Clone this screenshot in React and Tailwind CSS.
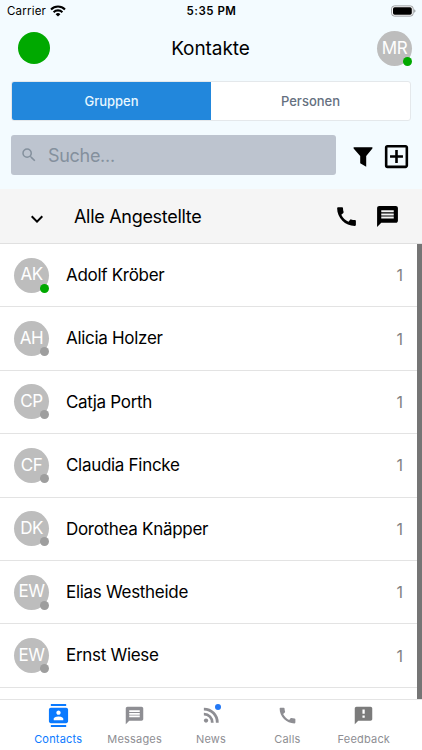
import React, { useState } from 'react'
import {
  MdCall,
  MdContacts,
  MdExpandMore,
  MdMessage,
  MdOutlineAddBox,
  MdSearch,
} from 'react-icons/md'

const WifiIcon = () => (
  <svg width="16" height="12" viewBox="0 0 16 12" fill="none" stroke="black" strokeWidth="2.1">
    <path d="M1 4.4a10 10 0 0 1 14 0" />
    <path d="M3.6 7.2a6.3 6.3 0 0 1 8.8 0" />
    <path d="M8 11.6L5.6 9.2a3.4 3.4 0 0 1 4.8 0z" fill="black" stroke="none" />
  </svg>
)

const BatteryIcon = () => (
  <svg width="25" height="12" viewBox="0 0 25 12">
    <rect x="0.6" y="0.9" width="21.6" height="10.2" rx="2.8" fill="white" stroke="#9a9da0" />
    <rect x="2" y="2.3" width="18.8" height="7.4" rx="1.6" fill="black" />
    <path d="M23.3 4.2a2 2 0 0 1 0 3.6z" fill="#85888a" />
  </svg>
)

const FunnelIcon = () => (
  <svg width="20" height="20" viewBox="0 0 20 20" fill="black">
    <path d="M.6.3h18.8v1.2L13.2 8.9v10.9L7.2 16.2V8.9L.6 1.5z" />
  </svg>
)

const RssIcon = ({ size }) => (
  <svg width={size} height={size} viewBox="0 0 20 20" fill="none" stroke="currentColor" strokeWidth="2.7">
    <circle cx="4.9" cy="15.2" r="2.1" fill="currentColor" stroke="none" />
    <path d="M2.8 8.9a8 8 0 0 1 8.2 8.4" />
    <path d="M2.8 4a13 13 0 0 1 13.1 13.3" />
  </svg>
)

const FeedbackIcon = ({ size }) => (
  <svg width={size} height={size} viewBox="0 0 24 24">
    <path d="M20 2H4c-1.1 0-2 .9-2 2v18l4-4h14c1.1 0 2-.9 2-2V4c0-1.1-.9-2-2-2z" fill="#7b7b7b" />
    <path d="M10.8 5h2.6v5h-2.6zM10.8 12h2.6v2.6h-2.6z" fill="white" />
  </svg>
)

const contacts = [
  { initials: 'AK', name: 'Adolf Kröber', count: 1, online: true },
  { initials: 'AH', name: 'Alicia Holzer', count: 1 },
  { initials: 'CP', name: 'Catja Porth', count: 1 },
  { initials: 'CF', name: 'Claudia Fincke', count: 1 },
  { initials: 'DK', name: 'Dorothea Knäpper', count: 1 },
  { initials: 'EW', name: 'Elias Westheide', count: 1 },
  { initials: 'EW', name: 'Ernst Wiese', count: 1 },
]

const tabs = [
  { label: 'Contacts', icon: MdContacts, size: 23 },
  { label: 'Messages', icon: MdMessage, size: 21 },
  { label: 'News', icon: RssIcon, size: 20.5, unread: true },
  { label: 'Calls', icon: MdCall, size: 21 },
  { label: 'Feedback', icon: FeedbackIcon, size: 21 },
]

const Avatar = ({ initials, online = false }) => (
  <div className="relative flex h-[35px] w-[35px] shrink-0 items-center justify-center rounded-full bg-[#bdbdbd] text-[17px] tracking-[-0.5px] text-white">
    {initials}
    <span
      className={`absolute right-0 bottom-0 h-[9px] w-[9px] rounded-full ${online ? 'bg-[#00a900]' : 'bg-[#9e9e9e]'}`}
    />
  </div>
)

const StatusBar = () => (
  <div className="grid h-[22px] grid-cols-3 items-center pl-[7px] pr-[6px] text-[11.5px]">
    <div className="flex items-center gap-1">
      <span className="pt-0.5 tracking-[0.2px]">Carrier</span>
      <WifiIcon />
    </div>
    <span className="pt-0.5 text-center font-semibold tracking-[0.5px]">5:35 PM</span>
    <div className="flex justify-end">
      <BatteryIcon />
    </div>
  </div>
)

const SegmentedControl = ({ value, onChange }) => (
  <div className="mx-[11px] mt-[6px] flex h-10 overflow-hidden rounded-[3px] border border-[#e4e8eb] bg-white text-[13px] font-medium">
    {['Gruppen', 'Personen'].map((item) => (
      <button
        key={item}
        onClick={() => onChange(item)}
        className={`flex-1 pt-0.5 ${value === item ? 'bg-[#2287dc] text-[#e8f7ff]' : 'text-[#657080]'}`}
      >
        {item}
      </button>
    ))}
  </div>
)

const ContactRow = ({ contact }) => (
  <li className="flex h-[63.4px] shrink-0 items-center border-b border-[#e3e3e3] pl-[14px] pr-[14px]">
    <Avatar initials={contact.initials} online={contact.online} />
    <span className="ml-[17px] flex-1 pt-px text-[17px] tracking-[-0.3px]">{contact.name}</span>
    <span className="text-base text-[#828282]">{contact.count}</span>
  </li>
)

const TabBar = ({ active, onChange }) => (
  <nav className="flex h-[51px] shrink-0 border-t border-[#e4e4e4] bg-white px-5">
    {tabs.map(({ label, icon: Icon, size, unread }) => (
      <button
        key={label}
        onClick={() => onChange(label)}
        className={`flex flex-1 flex-col items-center ${active === label ? 'text-[#0a7aff]' : 'text-[#8e8e93]'}`}
      >
        <span className="relative mt-1 flex h-[23px] items-center">
          <Icon size={size} />
          {unread && <span className="absolute right-0 top-0 h-1.5 w-1.5 rounded-full bg-[#2378f5]" />}
        </span>
        <span className="mt-1 text-[11px] leading-4 tracking-[0.2px]">{label}</span>
      </button>
    ))}
  </nav>
)

export default function App() {
  const [segment, setSegment] = useState('Gruppen')
  const [activeTab, setActiveTab] = useState('Contacts')
  const [query, setQuery] = useState('')

  return (
    <div className="flex h-[750px] w-[422px] flex-col overflow-hidden bg-white font-['Inter',sans-serif] text-black">
      <header className="h-[189px] shrink-0 bg-[#f3fbff]">
        <StatusBar />

        {/* Title row */}
        <div className="grid h-[53px] grid-cols-[1fr_auto_1fr] items-center pl-[18px] pr-[10px]">
          <div className="-mt-0.5 h-8 w-8 rounded-full bg-[#00a900]" />
          <h1 className="mr-[9px] pt-0.5 text-[19px] tracking-[-0.05px]">Kontakte</h1>
          <div className="justify-self-end">
            <Avatar initials="MR" online />
          </div>
        </div>

        <SegmentedControl value={segment} onChange={setSegment} />

        {/* Search */}
        <div className="mt-[14px] flex items-center pl-[11px]">
          <div className="flex h-10 w-[325px] items-center rounded-[3px] bg-[#bdc4cf] pl-[9px]">
            <MdSearch size={18} className="text-[#84909d]" />
            <input
              value={query}
              onChange={(e) => setQuery(e.target.value)}
              placeholder="Suche..."
              className="ml-[10px] w-60 bg-transparent text-[18px] tracking-[-0.3px] outline-none placeholder:text-[#84909d]"
            />
          </div>
          <div className="ml-[17px] mt-[3px] flex items-center gap-[8px]">
            <FunnelIcon />
            <MdOutlineAddBox size={31} />
          </div>
        </div>
      </header>

      {/* Group header */}
      <div className="flex h-[55px] shrink-0 items-center border-b border-[#e0e0e0] bg-[#f5f5f5] pl-[25px] pr-[22px]">
        <MdExpandMore size={24} className="mt-[5px]" />
        <span className="ml-[25px] flex-1 text-[18px] tracking-[-0.3px]">Alle Angestellte</span>
        <MdCall size={25} />
        <MdMessage size={25} className="ml-[16px]" />
      </div>

      <div className="flex min-h-0 flex-1 overflow-hidden">
        <ul className="flex flex-1 flex-col">
          {contacts.map((contact) => (
            <ContactRow key={contact.name} contact={contact} />
          ))}
        </ul>
        <div className="w-[5px] bg-[#757575]" />
      </div>

      <TabBar active={activeTab} onChange={setActiveTab} />
    </div>
  )
}
